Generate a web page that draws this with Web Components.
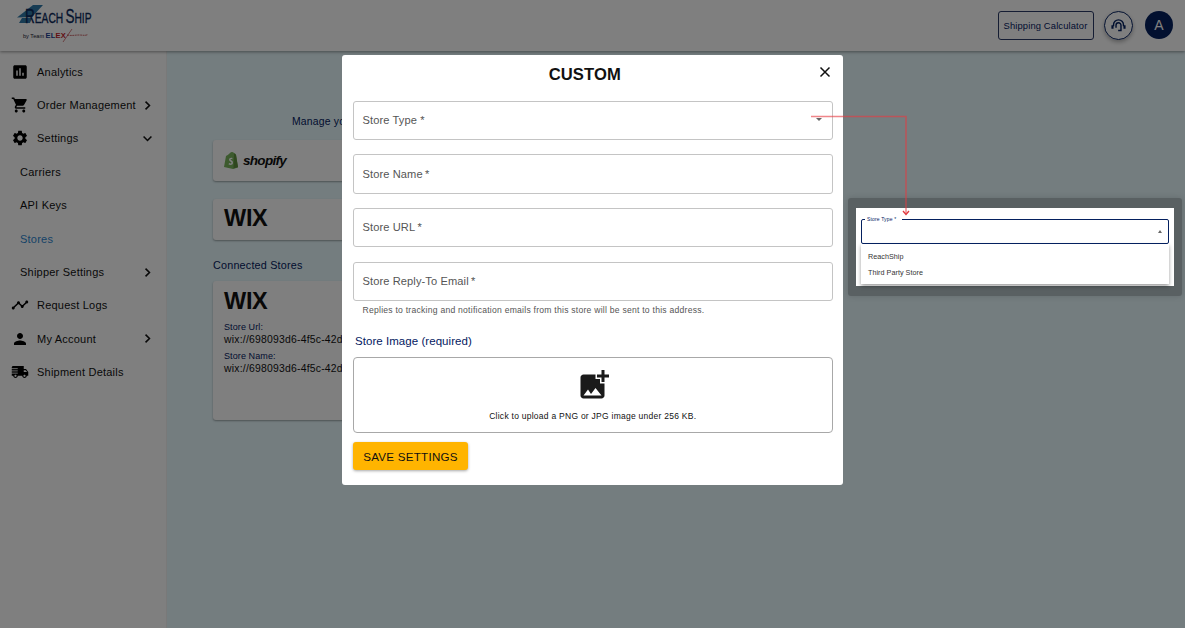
<!DOCTYPE html>
<html>
<head>
<meta charset="utf-8">
<title>Stores</title>
<style>
  html, body { margin: 0; height: 100%; background: #fff; overflow: hidden; }
  body { font-family: "Liberation Sans", Arial, sans-serif; }
</style>
</head>
<body>
<reach-app>
  <app-header slot="header"></app-header>
  <side-nav slot="nav">
    <nav-item icon="analytics">Analytics</nav-item>
    <nav-item icon="cart" chevron="right">Order Management</nav-item>
    <nav-item icon="settings" chevron="down">Settings</nav-item>
    <nav-item sub>Carriers</nav-item>
    <nav-item sub>API Keys</nav-item>
    <nav-item sub active>Stores</nav-item>
    <nav-item sub chevron="right">Shipper Settings</nav-item>
    <nav-item icon="timeline">Request Logs</nav-item>
    <nav-item icon="person" chevron="right">My Account</nav-item>
    <nav-item icon="truck">Shipment Details</nav-item>
  </side-nav>
  <stores-page slot="main"></stores-page>
  <store-modal slot="modal"></store-modal>
  <dropdown-callout slot="callout"></dropdown-callout>
</reach-app>

<script>
const ICONS = {
  analytics: '<path d="M19 3H5c-1.1 0-2 .9-2 2v14c0 1.1.9 2 2 2h14c1.1 0 2-.9 2-2V5c0-1.1-.9-2-2-2zM9 17H7v-7h2v7zm4 0h-2V7h2v10zm4 0h-2v-4h2v4z"/>',
  cart: '<path d="M7 18c-1.1 0-1.99.9-1.99 2S5.9 22 7 22s2-.9 2-2-.9-2-2-2zM1 2v2h2l3.6 7.59-1.35 2.45c-.16.28-.25.61-.25.96 0 1.1.9 2 2 2h12v-2H7.42c-.14 0-.25-.11-.25-.25l.03-.12.9-1.63h7.45c.75 0 1.41-.41 1.75-1.03l3.58-6.47c.08-.14.12-.31.12-.48 0-.55-.45-1-1-1H5.21l-.94-2H1zm16 16c-1.1 0-1.99.9-1.99 2s.89 2 1.99 2 2-.9 2-2-.9-2-2-2z"/>',
  settings: '<path d="M19.14 12.94c.04-.3.06-.61.06-.94 0-.32-.02-.64-.07-.94l2.03-1.58c.18-.14.23-.41.12-.61l-1.92-3.32c-.12-.22-.37-.29-.59-.22l-2.39.96c-.5-.38-1.03-.7-1.62-.94l-.36-2.54c-.04-.24-.24-.41-.48-.41h-3.84c-.24 0-.43.17-.47.41l-.36 2.54c-.59.24-1.13.57-1.62.94l-2.39-.96c-.22-.08-.47 0-.59.22L2.74 8.87c-.12.21-.08.47.12.61l2.03 1.58c-.05.3-.09.63-.09.94s.02.64.07.94l-2.03 1.58c-.18.14-.23.41-.12.61l1.92 3.32c.12.22.37.29.59.22l2.39-.96c.5.38 1.03.7 1.62.94l.36 2.54c.05.24.24.41.48.41h3.84c.24 0 .44-.17.47-.41l.36-2.54c.59-.24 1.13-.56 1.62-.94l2.39.96c.22.08.47 0 .59-.22l1.92-3.32c.12-.22.07-.47-.12-.61l-2.01-1.58zM12 15.6c-1.98 0-3.6-1.62-3.6-3.6s1.62-3.6 3.6-3.6 3.6 1.62 3.6 3.6-1.62 3.6-3.6 3.6z"/>',
  timeline: '<path d="M23 8c0 1.1-.9 2-2 2-.18 0-.35-.02-.51-.07l-3.56 3.55c.05.16.07.34.07.52 0 1.1-.9 2-2 2s-2-.9-2-2c0-.18.02-.36.07-.52l-2.55-2.55c-.16.05-.34.07-.52.07s-.36-.02-.52-.07l-4.55 4.56c.05.16.07.33.07.51 0 1.1-.9 2-2 2s-2-.9-2-2 .9-2 2-2c.18 0 .35.02.51.07l4.56-4.55C8.02 9.36 8 9.18 8 9c0-1.1.9-2 2-2s2 .9 2 2c0 .18-.02.36-.07.52l2.55 2.55c.16-.05.34-.07.52-.07s.36.02.52.07l3.55-3.56C19.02 8.35 19 8.18 19 8c0-1.1.9-2 2-2s2 .9 2 2z"/>',
  person: '<path d="M12 12c2.21 0 4-1.79 4-4s-1.79-4-4-4-4 1.79-4 4 1.79 4 4 4zm0 2c-2.67 0-8 1.34-8 4v2h16v-2c0-2.66-5.33-4-8-4z"/>',
  truck: '<path d="M20 8h-3V4H3c-1.1 0-2 .9-2 2v11h2c0 1.66 1.34 3 3 3s3-1.34 3-3h6c0 1.66 1.34 3 3 3s3-1.34 3-3h2v-5l-3-4zM6 18.5c-.83 0-1.5-.67-1.5-1.5s.67-1.5 1.5-1.5 1.5.67 1.5 1.5-.67 1.5-1.5 1.5zm13.5-9l1.96 2.5H17V9.5h2.5zm-1.5 9c-.83 0-1.5-.67-1.5-1.5s.67-1.5 1.5-1.5 1.5.67 1.5 1.5-.67 1.5-1.5 1.5z"/><path d="M0 7.500h9M0 10.500h9M0 13.500h9" stroke="#fff" stroke-width="1.100"/>'
};

// Contenedor principal: cabecera, menu lateral y capas del modal
class ReachApp extends HTMLElement {
  constructor() {
    super();
    this.attachShadow({ mode: "open" });
  }

  connectedCallback() {
    this.shadowRoot.innerHTML = `
      <style>
        :host { display: block; position: relative; width: 1185px; height: 628px; overflow: hidden; }
        .shell { display: flex; flex-direction: column; height: 100%; }
        .body { display: flex; flex: 1; min-height: 0; }
        .scrim { position: absolute; inset: 0; z-index: 2; background: rgba(0, 0, 0, .5); }
        ::slotted([slot="modal"]), ::slotted([slot="callout"]) { z-index: 3; }
      </style>
      <div class="shell">
        <slot name="header"></slot>
        <div class="body">
          <slot name="nav"></slot>
          <slot name="main"></slot>
        </div>
      </div>
      <div class="scrim"></div>
      <slot name="modal"></slot>
      <slot name="callout"></slot>
    `;
  }
}
customElements.define("reach-app", ReachApp);

class AppHeader extends HTMLElement {
  constructor() {
    super();
    this.attachShadow({ mode: "open" });
  }

  connectedCallback() {
    this.shadowRoot.innerHTML = `
      <style>
        :host {
          display: flex; align-items: center; height: 51px; box-sizing: border-box;
          background: #fff; padding: 0 12px 1px 17px; position: relative; z-index: 1;
          box-shadow: 0 1px 3px rgba(0, 0, 0, .4);
        }
        .logo { position: relative; width: 78px; height: 42px; flex: none; align-self: flex-start; }
        .logo svg { position: absolute; left: 0; top: 5px; }
        .word {
          position: absolute; left: 8px; top: 6px; font: 400 15.5px/19px "Liberation Sans", sans-serif;
          color: #0b2a5c; transform: scaleX(.66); transform-origin: left top; white-space: nowrap;
          -webkit-text-stroke: .35px #0b2a5c; word-spacing: -1px;
        }
        .word b { font-weight: 400; font-size: 20.5px; }
        .by {
          position: absolute; left: 6px; top: 32px; font: 400 5.6px/8px "Liberation Sans", sans-serif;
          color: #223; white-space: nowrap;
        }
        .by b { font-size: 7.5px; color: #1c3f94; letter-spacing: .2px; }
        .by b i { font-style: normal; color: #c62026; }
        .spacer { flex: 1; }
        .calc {
          width: 96px; height: 29px; box-sizing: border-box; border: 1px solid #2b3a67; border-radius: 3px;
          display: flex; align-items: center; justify-content: center; color: #04205f;
          font-size: 9.4px; letter-spacing: .14px; white-space: nowrap;
        }
        .help {
          width: 29px; height: 29px; box-sizing: border-box; border: 1px solid #04205f; border-radius: 50%;
          margin-left: 10px; display: flex; align-items: center; justify-content: center;
          box-shadow: 0 2px 4px rgba(0, 0, 0, .3);
        }
        .avatar {
          width: 28px; height: 28px; border-radius: 50%; background: #04205f; color: #fff; margin-left: 12.5px;
          display: flex; align-items: center; justify-content: center; font-size: 14px;
        }
      </style>
      <div class="logo">
        <svg width="30" height="20" viewBox="0 0 30 20"><path d="M16 0H26L15 12L0 12.500Z" fill="#2f78a8"/><path d="M5 13H15L13 18H2Z" fill="#2f78a8"/></svg>
        <span class="word"><b>R</b>EACH <b>S</b>HIP</span>
        <span class="by">by Team <b>EL<i>EX</i></b></span>
        <svg width="30" height="18" viewBox="0 0 30 18" style="left:44px;top:27px"><path d="M2 15 11 2" fill="none" stroke="#b3282d" stroke-width=".6"/><path d="M6 8c5 1 8 0 12 0s6 1 9-.5" fill="none" stroke="#b3282d" stroke-width=".7" stroke-dasharray="2 .6"/></svg>
      </div>
      <div class="spacer"></div>
      <div class="calc">Shipping Calculator</div>
      <div class="help">
        <svg width="17" height="17" viewBox="0 0 24 24" fill="none" stroke="#04205f" stroke-width="2"><path d="M5 13v-2a7 7 0 0 1 14 0v2"/><path d="M8.500 15v-3.500a3.500 3.500 0 0 1 7 0V19h-4"/><path d="M3.500 11.500v5M20.500 11.500v5" stroke-width="3"/></svg>
      </div>
      <div class="avatar">A</div>
    `;
  }
}
customElements.define("app-header", AppHeader);

class SideNav extends HTMLElement {
  constructor() {
    super();
    this.attachShadow({ mode: "open" });
  }

  connectedCallback() {
    this.shadowRoot.innerHTML = `
      <style>
        :host {
          display: flex; flex-direction: column; width: 167px; flex: none; box-sizing: border-box;
          background: #fff; padding-top: 4px; border-right: 1px solid #f2f2f2;
        }
      </style>
      <slot></slot>
    `;
  }
}
customElements.define("side-nav", SideNav);

class NavItem extends HTMLElement {
  constructor() {
    super();
    this.attachShadow({ mode: "open" });
  }

  connectedCallback() {
    const icon = this.getAttribute("icon");
    const chevron = this.getAttribute("chevron");
    const chevronPath = chevron === "down" ? "M2 4.500l5 5 5-5" : "M4.500 2l5 5-5 5";
    this.shadowRoot.innerHTML = `
      <style>
        :host {
          display: flex; align-items: center; height: 33.4px; flex: none; box-sizing: border-box;
          padding: 0 13px 0 ${icon ? 10.5 : 20}px; color: #111;
          font-size: 11px; letter-spacing: .22px; white-space: nowrap;
        }
        :host([active]) { color: #2c86cf; }
        .icon { width: 18px; height: 18px; margin-right: 8.5px; flex: none; fill: #000; }
        .text { flex: 1; }
        .chev { width: 11px; height: 11px; flex: none; fill: none; stroke: #111; stroke-width: 2; }
      </style>
      ${icon ? `<svg class="icon" viewBox="0 0 24 24">${ICONS[icon]}</svg>` : ""}
      <span class="text"><slot></slot></span>
      ${chevron ? `<svg class="chev" viewBox="0 0 14 14"><path d="${chevronPath}"/></svg>` : ""}
    `;
  }
}
customElements.define("nav-item", NavItem);

class StoreCard extends HTMLElement {
  constructor() {
    super();
    this.attachShadow({ mode: "open" });
  }

  connectedCallback() {
    this.shadowRoot.innerHTML = `
      <style>
        :host {
          display: block; box-sizing: border-box; background: #fff; border-radius: 3px; width: 400px;
          padding: 0 11px; box-shadow: 0 1px 2px rgba(0, 0, 0, .35);
        }
      </style>
      <slot></slot>
    `;
  }
}
customElements.define("store-card", StoreCard);

class StoresPage extends HTMLElement {
  constructor() {
    super();
    this.attachShadow({ mode: "open" });
  }

  connectedCallback() {
    this.shadowRoot.innerHTML = `
      <style>
        :host {
          display: block; flex: 1; background: #e8fafe; padding: 65px 0 0 46px; box-sizing: border-box;
          color: #04205f; font-size: 10.4px; letter-spacing: .2px;
        }
        .intro { margin-left: 79px; height: 24px; line-height: 12px; font-size: 10.4px; white-space: nowrap; }
        .shop { height: 41px; display: flex; align-items: center; margin-left: -1px; }
        .shop svg { margin-right: 3px; }
        .shop span {
          font: italic 700 13.5px "Liberation Sans", sans-serif; color: #111; letter-spacing: -.7px;
        }
        .wix {
          font: 700 23.5px/28px "Liberation Sans", sans-serif; color: #111; letter-spacing: -.3px;
        }
        .tile { margin-top: 18px; height: 41px; padding-bottom: 4px; display: flex; align-items: center; }
        h3 { margin: 19px 0 9px; font: 400 10.8px/13px "Liberation Sans", sans-serif; letter-spacing: .2px; }
        .big { height: 139px; padding-top: 6px; }
        .label { font-size: 9px; line-height: 11px; margin-top: 7px; letter-spacing: .1px; }
        .value { font-size: 10.4px; line-height: 13px; color: #111; white-space: nowrap; letter-spacing: .22px; }
        .value + .label { margin-top: 5px; }
      </style>
      <div class="intro">Manage yo</div>
      <store-card>
        <div class="shop">
          <svg width="17" height="19" viewBox="0 0 17 19"><path d="M1 16 3 5c2-1 3-2 4-3 1-1.500 3-1.500 4 0l1 .500 1 1 2 13-5 1.500z" fill="#7ab55c"/><path d="M11 2.500l1 .5 1 1 2 12-4.500 1.500z" fill="#5e8e3e"/><path d="M9.500 7c-2-.6-3.500.4-3.500 1.800 0 1.700 2.500 1.800 2.500 3 0 1-1.500.8-2.500.2l-.4 1.500c2 .9 4.400.3 4.400-1.800s-2.500-2.200-2.500-3.100c0-.6.800-.8 1.700-.4z" fill="#fff"/></svg>
          <span>shopify</span>
        </div>
      </store-card>
      <store-card class="tile">
        <span class="wix">WIX</span>
      </store-card>
      <h3>Connected Stores</h3>
      <store-card class="big">
        <div class="wix">WIX</div>
        <div class="label">Store Url:</div>
        <div class="value">wix://698093d6-4f5c-42d0</div>
        <div class="label">Store Name:</div>
        <div class="value">wix://698093d6-4f5c-42d0</div>
      </store-card>
    `;
  }
}
customElements.define("stores-page", StoresPage);

class TextField extends HTMLElement {
  constructor() {
    super();
    this.attachShadow({ mode: "open" });
  }

  connectedCallback() {
    this.shadowRoot.innerHTML = `
      <style>
        :host {
          display: flex; align-items: center; justify-content: space-between; height: 39.4px; box-sizing: border-box;
          border: 1px solid #c4c4c4; border-radius: 3px; padding: 0 8.5px 1px; color: #555;
          font-size: 11.1px; letter-spacing: .1px;
        }
        .caret { width: 0; height: 0; margin-right: 1px; border: 3.5px solid transparent; border-top: 3.5px solid #666; border-bottom: 0; }
      </style>
      <span><slot></slot></span>
      ${this.hasAttribute("select") ? '<span class="caret"></span>' : ""}
    `;
  }
}
customElements.define("text-field", TextField);

class StoreModal extends HTMLElement {
  constructor() {
    super();
    this.attachShadow({ mode: "open" });
  }

  connectedCallback() {
    this.shadowRoot.innerHTML = `
      <style>
        :host {
          position: absolute; left: 342px; top: 55px; width: 501px; height: 430px; box-sizing: border-box;
          background: #fff; border-radius: 3px; padding: 0 10.5px 0 11px;
          display: flex; flex-direction: column;
        }
        .head { position: relative; height: 45.7px; box-sizing: border-box; padding: 0 16px 6px 0; display: flex; align-items: center; justify-content: center; }
        h2 { margin: 0; font: 700 16.6px "Liberation Sans", sans-serif; color: #111; letter-spacing: .1px; }
        .close { position: absolute; right: 0; top: 9px; width: 16px; height: 16px; }
        .fields { display: flex; flex-direction: column; gap: 14.3px; }
        .hint { margin: 4px 0 0 9.500px; font-size: 8.6px; line-height: 11px; color: #555; letter-spacing: .24px; }
        .img-label { margin: 18px 0 0 2px; font-size: 11.5px; line-height: 14px; color: #04205f; letter-spacing: .05px; }
        .upload {
          margin-top: 9px; height: 76px; box-sizing: border-box; border: 1px solid #a8a8a8; border-radius: 4px;
          display: flex; flex-direction: column; align-items: center;
          color: #111; font-size: 8.5px; letter-spacing: .26px; line-height: 11px;
        }
        .upload svg { margin-top: 9px; margin-left: 2px; fill: #1a1a1a; }
        .upload span { margin-top: 8px; }
        .save {
          margin-top: 9px; width: 115px; height: 28px; border-radius: 3px; background: #ffb400; color: #111;
          display: flex; align-items: center; justify-content: center; font-size: 11.6px; letter-spacing: .25px;
          box-shadow: 0 1px 3px rgba(0, 0, 0, .35);
        }
      </style>
      <div class="head">
        <h2>CUSTOM</h2>
        <svg class="close" viewBox="0 0 16 16" fill="none" stroke="#111" stroke-width="1.500"><path d="M3.500 3.500l9 9M12.500 3.500l-9 9"/></svg>
      </div>
      <div class="fields">
        <text-field select>Store Type *</text-field>
        <text-field>Store Name&thinsp;*</text-field>
        <text-field>Store URL&thinsp;*</text-field>
        <text-field>Store Reply-To Email&thinsp;*</text-field>
      </div>
      <div class="hint">Replies to tracking and notification emails from this store will be sent to this address.</div>
      <div class="img-label">Store Image (required)</div>
      <div class="upload">
        <svg width="36" height="36" viewBox="0 0 24 24"><path d="M19 7v2.990s-1.990.01-2 0V7h-3s.01-1.990 0-2h3V2h2v3h3v2h-3zm-3 4V8h-3V5H5c-1.100 0-2 .9-2 2v12c0 1.100.9 2 2 2h12c1.100 0 2-.9 2-2v-8h-3zM5 19l3-4 2 3 3-4 4 5H5z"/></svg>
        <span>Click to upload a PNG or JPG image under 256 KB.</span>
      </div>
      <div class="save">SAVE SETTINGS</div>
    `;
  }
}
customElements.define("store-modal", StoreModal);

// Recorte de referencia con el desplegable abierto y la flecha roja
class DropdownCallout extends HTMLElement {
  constructor() {
    super();
    this.attachShadow({ mode: "open" });
  }

  connectedCallback() {
    this.shadowRoot.innerHTML = `
      <style>
        :host { position: absolute; inset: 0; pointer-events: none; }
        .frame {
          position: absolute; left: 848px; top: 198px; width: 334px; height: 98px; box-sizing: border-box;
          background: #596062; border-radius: 3px; padding: 10px 8px 10px;
          box-shadow: 0 0 6px rgba(0, 0, 0, .15);
        }
        .shot { position: relative; height: 78px; background: #fff; padding: 11px 5px 0; box-sizing: border-box; }
        .select { position: relative; height: 25px; box-sizing: border-box; border: 1px solid #04205f; border-radius: 2px; }
        .legend {
          position: absolute; left: 3px; top: -4px; padding: 0 6px 0 2px; background: #fff; color: #04205f;
          font-size: 5px; line-height: 6px; letter-spacing: .15px; white-space: nowrap;
        }
        .up { position: absolute; right: 6px; top: 10px; width: 0; height: 0; border: 2.500px solid transparent; border-bottom: 3px solid #666; border-top: 0; }
        .menu {
          height: 40px; background: #fff; box-shadow: 0 2px 4px rgba(0, 0, 0, .4); padding: 4.500px 0 0 7px; box-sizing: border-box;
          color: #333; font-size: 7.2px; line-height: 16px; letter-spacing: .04px;
        }
        svg.arrow { position: absolute; left: 0; top: 0; }
      </style>
      <div class="frame">
        <div class="shot">
          <div class="select"><span class="legend">Store Type *</span><span class="up"></span></div>
          <div class="menu"><div>ReachShip</div><div>Third Party Store</div></div>
        </div>
      </div>
      <svg class="arrow" width="1185" height="628">
        <path d="M811 116.500H906V213" fill="none" stroke="#e63c42" stroke-opacity=".62" stroke-width="1.500"/>
        <path d="M903 211l3 3.500 3-3.500" fill="none" stroke="#e0363c" stroke-width="1.300"/>
      </svg>
    `;
  }
}
customElements.define("dropdown-callout", DropdownCallout);
</script>
</body>
</html>
